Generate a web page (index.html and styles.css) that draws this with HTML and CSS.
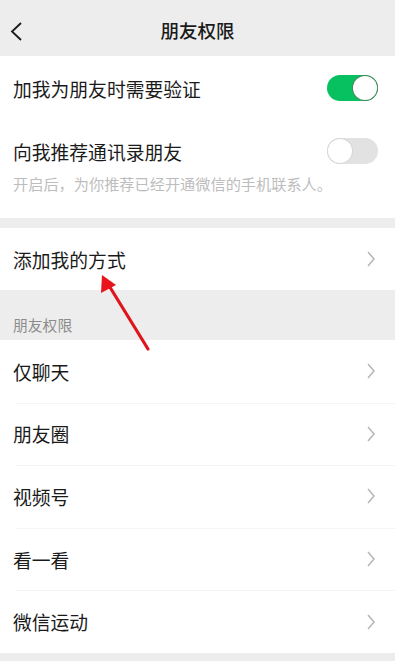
FILE: index.html
```html
<!DOCTYPE html>
<html lang="zh-CN">

<head>
    <meta charset="UTF-8">
    <meta name="viewport" content="width=device-width, initial-scale=1.0">
    <title>朋友权限</title>
    <link rel="stylesheet" href="styles.css">
</head>

<body>
    <header class="topbar">
        <svg class="back" width="14" height="22" viewBox="0 0 14 22">
            <polyline points="11,2 2,10.5 11,19" fill="none" stroke="#1a1a1a" stroke-width="1.8" />
        </svg>
        <h1>朋友权限</h1>
    </header>

    <section class="group">
        <div class="row row-first">
            <span>加我为朋友时需要验证</span>
            <span class="switch on"><span class="knob"></span></span>
        </div>
        <div class="row-tall">
            <div class="row-line">
                <span>向我推荐通讯录朋友</span>
                <span class="switch"><span class="knob"></span></span>
            </div>
            <p class="hint">开启后，为你推荐已经开通微信的手机联系人。</p>
        </div>
    </section>

    <section class="group gap">
        <div class="row link">
            <span>添加我的方式</span>
            <svg class="arrow" width="10" height="16" viewBox="0 0 10 16">
                <polyline points="2,1 8,8 2,15" fill="none" stroke="#b6b6b6" stroke-width="1.5" />
            </svg>
        </div>
    </section>

    <div class="label">朋友权限</div>

    <section class="group list">
        <div class="row link"><span>仅聊天</span><svg class="arrow" width="10" height="16" viewBox="0 0 10 16"><polyline points="2,1 8,8 2,15" fill="none" stroke="#b6b6b6" stroke-width="1.5" /></svg></div>
        <div class="row link"><span>朋友圈</span><svg class="arrow" width="10" height="16" viewBox="0 0 10 16"><polyline points="2,1 8,8 2,15" fill="none" stroke="#b6b6b6" stroke-width="1.5" /></svg></div>
        <div class="row link"><span>视频号</span><svg class="arrow" width="10" height="16" viewBox="0 0 10 16"><polyline points="2,1 8,8 2,15" fill="none" stroke="#b6b6b6" stroke-width="1.5" /></svg></div>
        <div class="row link"><span>看一看</span><svg class="arrow" width="10" height="16" viewBox="0 0 10 16"><polyline points="2,1 8,8 2,15" fill="none" stroke="#b6b6b6" stroke-width="1.5" /></svg></div>
        <div class="row link"><span>微信运动</span><svg class="arrow" width="10" height="16" viewBox="0 0 10 16"><polyline points="2,1 8,8 2,15" fill="none" stroke="#b6b6b6" stroke-width="1.5" /></svg></div>
    </section>

    <!-- red annotation arrow drawn over the page -->
    <svg class="pointer" width="395" height="661" viewBox="0 0 395 661">
        <line x1="148" y1="349" x2="108" y2="284" stroke="#e0141c" stroke-width="3.2" stroke-linecap="round" />
        <polygon points="102,275 101,293 116,285" fill="#e8141c" />
    </svg>
</body>

</html>
```

FILE: styles.css
```css
body {
    margin: 0;
    padding: 0;
    background-color: #ededed;
    font-family: "Noto Sans CJK SC", "Noto Sans", sans-serif;
    color: #1a1a1a;
    height: 661px;
    overflow: hidden;
    position: relative;
}

.topbar {
    height: 56px;
    display: flex;
    align-items: center;
    justify-content: center;
    position: relative;
    background-color: #ededed;
}

.topbar h1 {
    margin: 0;
    font-size: 18.5px;
    font-weight: 500;
    line-height: 24px;
    margin-top: 4px;
}

.back {
    position: absolute;
    left: 10px;
    top: 21px;
}

.group {
    background-color: #fff;
}

.gap {
    margin-top: 10px;
}

.row {
    height: 62px;
    display: flex;
    align-items: center;
    justify-content: space-between;
    padding: 0 17px 0 13px;
    font-size: 18.8px;
}

.row-first {
    height: 64px;
    padding-right: 17px;
}

.row-tall {
    padding: 19px 17px 25px 13px;
}

.row-line {
    height: 24px;
    display: flex;
    align-items: center;
    justify-content: space-between;
    font-size: 18.8px;
}

.hint {
    margin: 10px 0 0;
    font-size: 15.2px;
    line-height: 20px;
    color: #bdbdbd;
}

.switch {
    width: 51px;
    height: 26px;
    border-radius: 13px;
    background-color: #e2e2e2;
    position: relative;
    box-sizing: border-box;
}

.switch .knob {
    position: absolute;
    top: 1px;
    left: 1px;
    width: 24px;
    height: 24px;
    border-radius: 50%;
    background-color: #fff;
    box-shadow: 0 0 0 1px #d6d6d6;
}

.switch.on {
    background-color: #07c160;
}

.switch.on .knob {
    left: 26px;
    box-shadow: 0 0 0 1px #4a8a5e;
}

.link .arrow {
    margin-right: 2px;
}

.label {
    height: 50px;
    box-sizing: border-box;
    padding: 25px 13px 0;
    font-size: 14.8px;
    line-height: 20px;
    color: #8c8c8c;
}

.list .row {
    height: 62.6px;
    box-sizing: border-box;
    position: relative;
}

.list .row + .row::before {
    content: "";
    position: absolute;
    left: 16px;
    right: 0;
    top: 0;
    border-top: 1px solid #f4f4f4;
}

.pointer {
    position: absolute;
    left: 0;
    top: 0;
    pointer-events: none;
}
```
